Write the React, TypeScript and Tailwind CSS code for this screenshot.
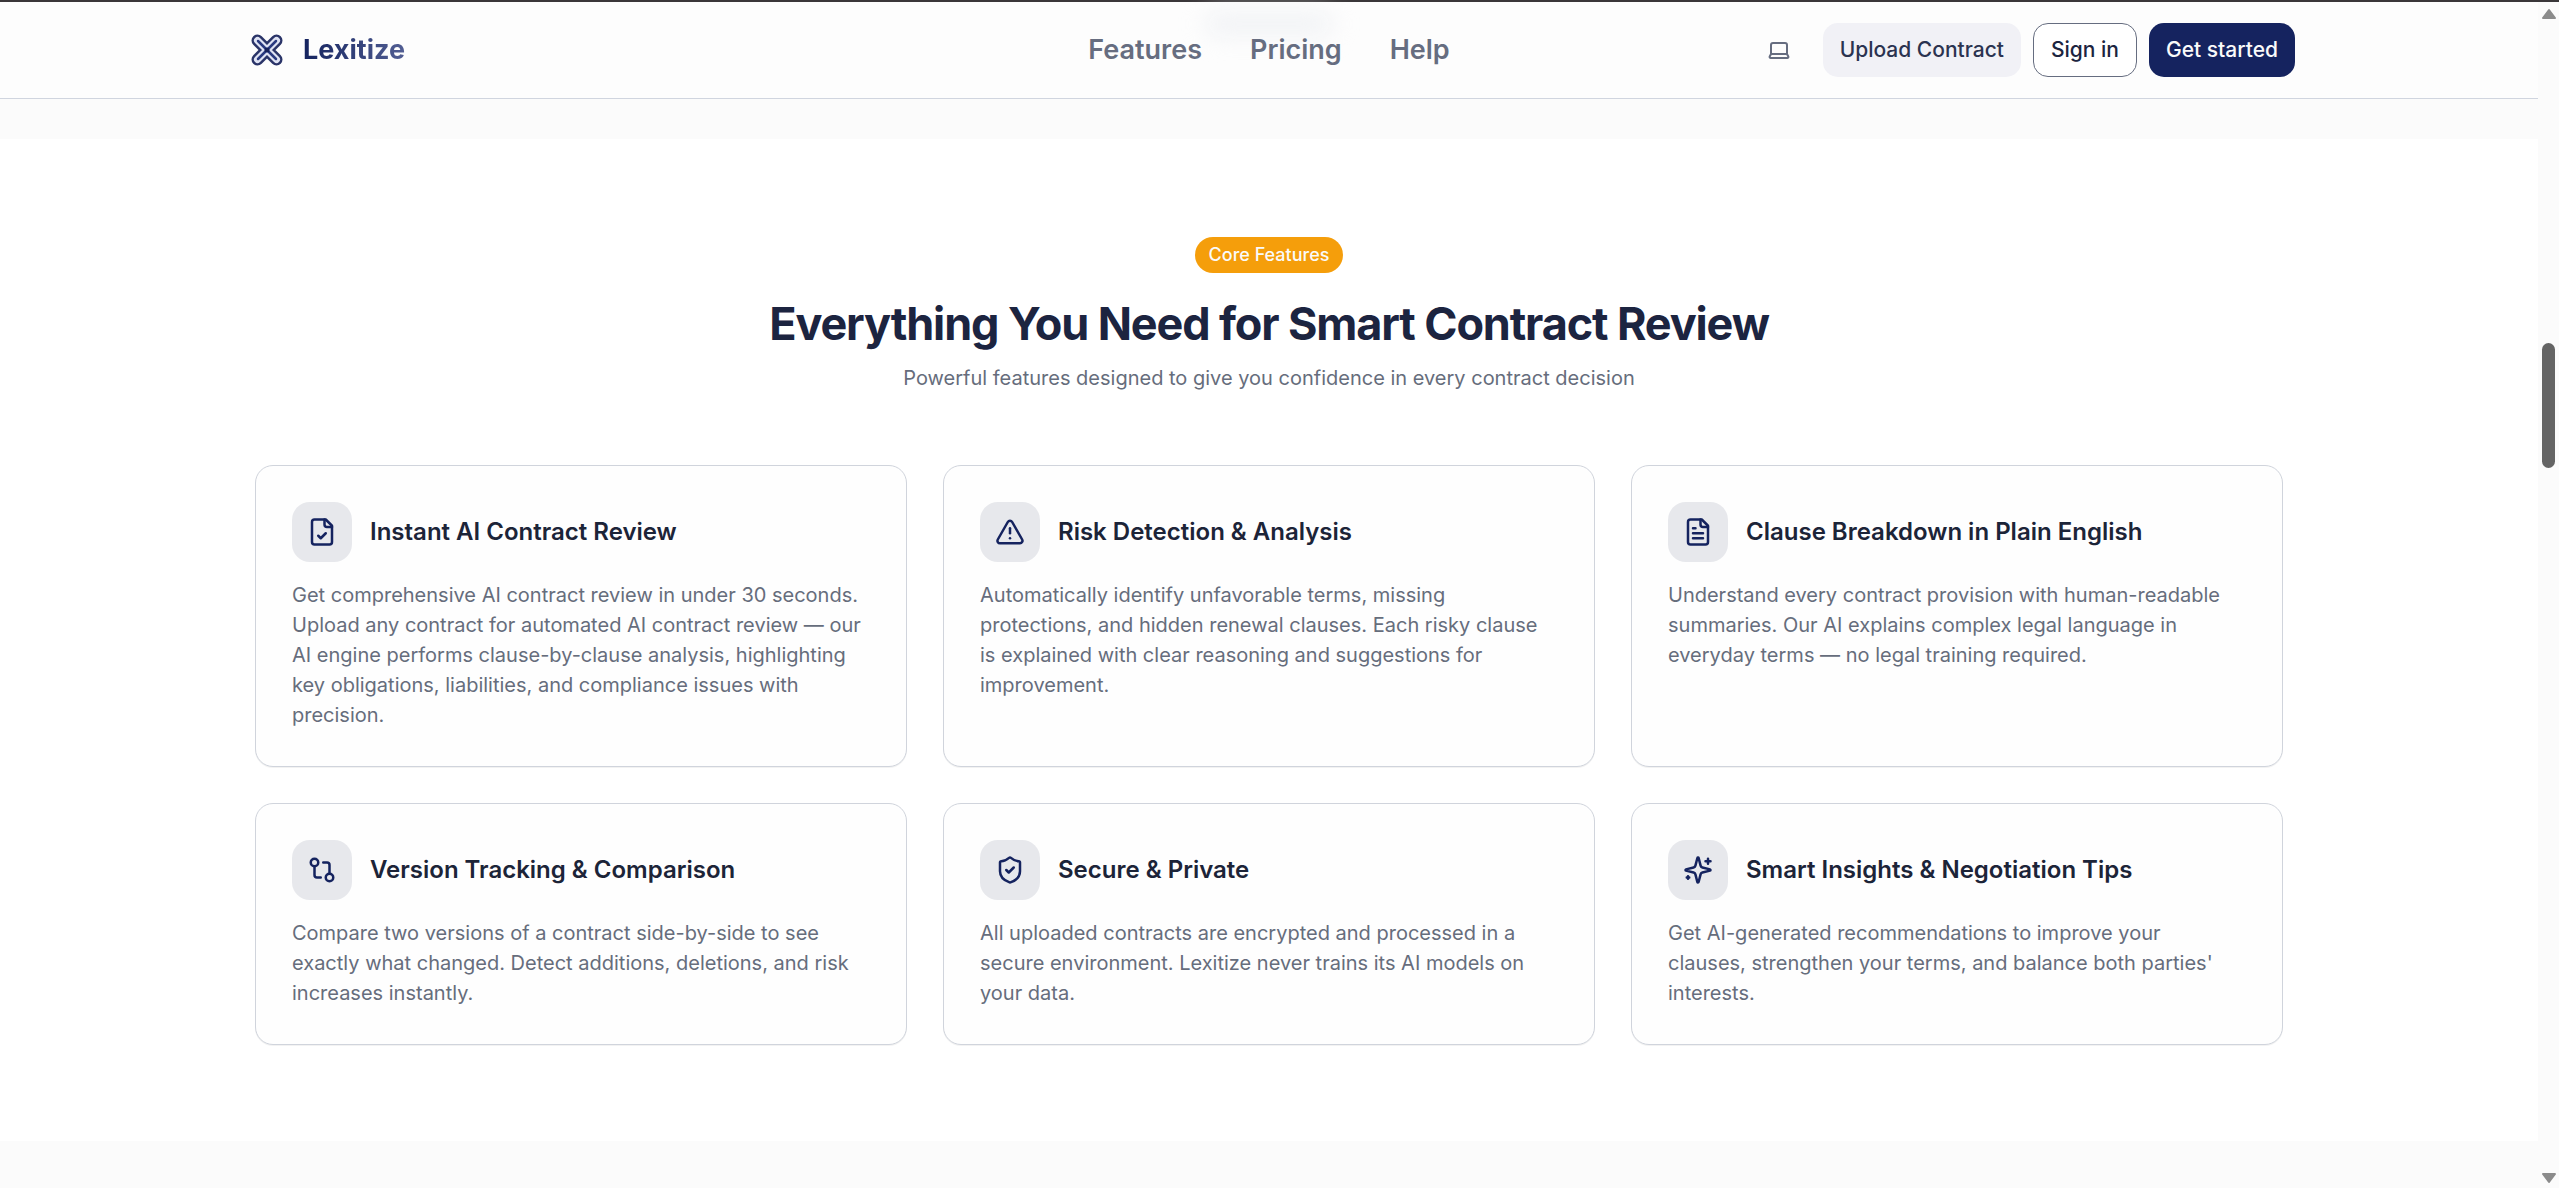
import type { ComponentType, ReactNode } from "react";
import { GitCompare, ShieldCheck, TriangleAlert } from "lucide-react";

interface IconProps {
  className?: string;
}

interface Feature {
  icon: ComponentType<IconProps>;
  title: string;
  description: string;
}

function StrokeIcon({ className, children }: IconProps & { children: ReactNode }) {
  return (
    <svg
      viewBox="0 0 24 24"
      className={className}
      fill="none"
      stroke="currentColor"
      strokeWidth="2"
      strokeLinecap="round"
      strokeLinejoin="round"
      aria-hidden="true"
    >
      {children}
    </svg>
  );
}

function FileCheck({ className }: IconProps) {
  return (
    <StrokeIcon className={className}>
      <path d="M15 2H6a2 2 0 0 0-2 2v16a2 2 0 0 0 2 2h12a2 2 0 0 0 2-2V7Z" />
      <path d="M14 2v4a2 2 0 0 0 2 2h4" />
      <path d="m9 15 2 2 4-4" />
    </StrokeIcon>
  );
}

function FileText({ className }: IconProps) {
  return (
    <StrokeIcon className={className}>
      <path d="M15 2H6a2 2 0 0 0-2 2v16a2 2 0 0 0 2 2h12a2 2 0 0 0 2-2V7Z" />
      <path d="M14 2v4a2 2 0 0 0 2 2h4" />
      <path d="M10 9H8M16 13H8M16 17H8" />
    </StrokeIcon>
  );
}

function Sparkles({ className }: IconProps) {
  return (
    <StrokeIcon className={className}>
      <path d="M9.937 15.5A2 2 0 0 0 8.5 14.063l-6.135-1.582a.5.5 0 0 1 0-.962L8.5 9.936A2 2 0 0 0 9.937 8.5l1.582-6.135a.5.5 0 0 1 .963 0L14.063 8.5A2 2 0 0 0 15.5 9.937l6.135 1.581a.5.5 0 0 1 0 .964L15.5 14.063a2 2 0 0 0-1.437 1.437l-1.582 6.135a.5.5 0 0 1-.963 0z" />
      <path d="M20 3v4M22 5h-4M4 17v2M5 18H3" />
    </StrokeIcon>
  );
}

function Laptop({ className }: IconProps) {
  return (
    <StrokeIcon className={className}>
      <path d="M20 16V7a2 2 0 0 0-2-2H6a2 2 0 0 0-2 2v9m16 0H4m16 0 1.280 2.550a1 1 0 0 1-.9 1.450H3.620a1 1 0 0 1-.9-1.450L4 16" />
    </StrokeIcon>
  );
}

const navLinks = ["Features", "Pricing", "Help"];

const features: Feature[] = [
  {
    icon: FileCheck,
    title: "Instant AI Contract Review",
    description:
      "Get comprehensive AI contract review in under 30 seconds. Upload any contract for automated AI contract review — our AI engine performs clause-by-clause analysis, highlighting key obligations, liabilities, and compliance issues with precision.",
  },
  {
    icon: TriangleAlert,
    title: "Risk Detection & Analysis",
    description:
      "Automatically identify unfavorable terms, missing protections, and hidden renewal clauses. Each risky clause is explained with clear reasoning and suggestions for improvement.",
  },
  {
    icon: FileText,
    title: "Clause Breakdown in Plain English",
    description:
      "Understand every contract provision with human-readable summaries. Our AI explains complex legal language in everyday terms — no legal training required.",
  },
  {
    icon: GitCompare,
    title: "Version Tracking & Comparison",
    description:
      "Compare two versions of a contract side-by-side to see exactly what changed. Detect additions, deletions, and risk increases instantly.",
  },
  {
    icon: ShieldCheck,
    title: "Secure & Private",
    description:
      "All uploaded contracts are encrypted and processed in a secure environment. Lexitize never trains its AI models on your data.",
  },
  {
    icon: Sparkles,
    title: "Smart Insights & Negotiation Tips",
    description:
      "Get AI-generated recommendations to improve your clauses, strengthen your terms, and balance both parties' interests.",
  },
];

function Logo() {
  return (
    <svg viewBox="0 0 48 48" className="size-12" fill="none" strokeLinecap="round" aria-hidden="true">
      <path d="M14.500 14.500L33.500 33.500M33.500 14.500L14.500 33.500" stroke="#2a3468" strokeWidth="12" />
      <path d="M14.500 14.500L33.500 33.500M33.500 14.500L14.500 33.500" stroke="#dfe3f4" strokeWidth="7" />
      <path d="M15 15L33 33M33 15L15 33" stroke="#2a3a80" strokeWidth="2.500" />
      <circle cx="24" cy="24" r="2.500" fill="#17215a" />
    </svg>
  );
}

function Header() {
  return (
    <header className="relative border-b border-[#d0d5df] bg-[#fdfdfd]">
      <div className="absolute left-1/2 top-3 h-5 w-32 -translate-x-1/2 rounded-full bg-[#eff1f4] blur-md" />
      <div className="relative mx-auto grid h-24 max-w-[2100px] grid-cols-[1fr_auto_1fr] items-center px-6">
        <a href="#" className="flex items-center gap-3">
          <Logo />
          <span className="bg-linear-to-r from-[#15235f] to-[#525e93] bg-clip-text text-[27px] font-bold text-transparent">
            Lexitize
          </span>
        </a>

        <nav className="flex items-center gap-12">
          {navLinks.map((link) => (
            <a key={link} href="#" className="text-[27px] font-semibold text-[#666d80]">
              {link}
            </a>
          ))}
        </nav>

        <div className="flex items-center justify-end gap-3 text-[21px] font-medium">
          <button aria-label="Toggle theme" className="mr-2 flex h-[54px] w-12 items-center justify-center text-[#666d80]">
            <Laptop className="size-6" />
          </button>
          <button className="h-[54px] rounded-[15px] bg-[#f1f1f6] px-[17px] text-[#2b3350]">Upload Contract</button>
          <button className="h-[54px] rounded-[15px] border border-[#666d80] bg-white px-[17px] text-[#1c2440]">
            Sign in
          </button>
          <button className="h-[54px] rounded-[15px] bg-[#15235f] px-[17px] text-[#fafafa]">Get started</button>
        </div>
      </div>
    </header>
  );
}

function FeatureCard({ icon: Icon, title, description }: Feature) {
  return (
    <div className="rounded-[18px] border border-[#d0d4dc] bg-[#fefefe] p-9 shadow-2xs">
      <div className="mb-[18px] flex items-center gap-[18px]">
        <div className="flex size-[60px] shrink-0 items-center justify-center rounded-[18px] bg-[#e7e8ec]">
          <Icon className="size-[30px] text-[#15235f]" />
        </div>
        <h3 className="text-2xl font-semibold text-[#1c2438]">{title}</h3>
      </div>
      <p className="pr-1 text-xl leading-[30px] text-[#666d7c]">{description}</p>
    </div>
  );
}

function Scrollbar() {
  return (
    <div className="flex w-[21px] flex-col items-center justify-between bg-[#fbfbfb] pb-1 pt-[6px]" aria-hidden="true">
      <svg viewBox="0 0 16 12" className="h-3 w-4">
        <path d="M8 2L14 10H2Z" fill="#8b8b8b" stroke="#8b8b8b" strokeWidth="2" strokeLinejoin="round" />
      </svg>
      <div className="flex w-full flex-1 flex-col items-center">
        <div className="basis-[28%]" />
        <div className="h-[125px] w-[13px] rounded-full bg-[#646464]" />
      </div>
      <svg viewBox="0 0 16 12" className="h-3 w-4">
        <path d="M8 10L14 2H2Z" fill="#8b8b8b" stroke="#8b8b8b" strokeWidth="2" strokeLinejoin="round" />
      </svg>
    </div>
  );
}

export default function App() {
  return (
    <div className="flex min-h-screen border-t-2 border-[#3a3739] bg-[#fbfbfb] font-['Inter','Liberation_Sans',sans-serif]">
      <div className="flex-1">
        <Header />

        <main className="pt-10">
          <section className="bg-white pb-24 pt-[98px]">
            <div className="mx-auto max-w-[2100px] px-9">
              <div className="mb-[72px] flex flex-col items-center text-center">
                <span className="rounded-full bg-[#f59e0b] px-[14px] py-[6px] text-lg leading-6 font-medium text-[#fafafa]">
                  Core Features
                </span>
                <h2 className="mt-6 text-[45px] leading-[54px] font-bold tracking-tight text-[#1c2440]">
                  Everything You Need for Smart Contract Review
                </h2>
                <p className="mt-3 text-xl leading-[30px] text-[#666d7c]">
                  Powerful features designed to give you confidence in every contract decision
                </p>
              </div>

              <div className="grid grid-cols-1 gap-9 md:grid-cols-2 lg:grid-cols-3">
                {features.map((feature) => (
                  <FeatureCard key={feature.title} {...feature} />
                ))}
              </div>
            </div>
          </section>
        </main>
      </div>
      <Scrollbar />
    </div>
  );
}
